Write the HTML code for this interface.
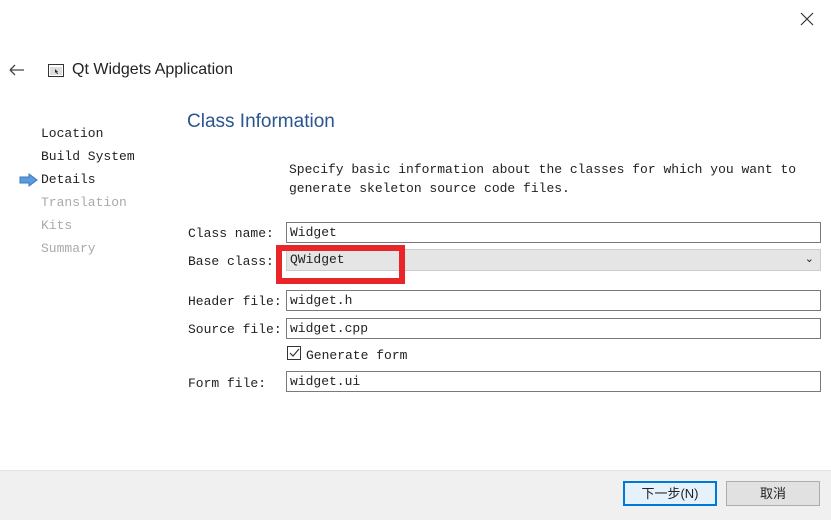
<!DOCTYPE html>
<html><head><meta charset="utf-8"><style>
body{margin:0;width:831px;height:519px;background:#fff;position:relative;overflow:hidden;font-family:"Liberation Mono","Noto Serif CJK SC",monospace;font-size:13px;color:#222}
.a{position:absolute;white-space:nowrap}
.f{position:absolute;left:286px;width:530px;height:19px;border:1px solid #7a7a7a;background:#fff;line-height:19px;padding-left:3px;box-sizing:content-box}
.l{position:absolute;left:188px}
.s{position:absolute;left:41px}
.btn{position:absolute;top:481px;height:25px;box-sizing:border-box;font-family:"Liberation Sans","Noto Sans CJK SC",sans-serif;font-size:13px;text-align:center;line-height:23px;background:#e1e1e1;border:1px solid #adadad}
</style></head><body>
<svg class="a" style="left:800px;top:12px" width="14" height="14"><path d="M1 1L13 13M13 1L1 13" stroke="#333" stroke-width="1.2"/></svg>
<svg class="a" style="left:9px;top:64px" width="16" height="12"><path d="M1 6H15M1 6L6 1M1 6L6 11" stroke="#444" stroke-width="1.3" fill="none"/></svg>
<svg class="a" style="left:48px;top:64px" width="16" height="13"><rect x="0.5" y="0.5" width="15" height="12" fill="#fff" stroke="#333"/><rect x="2" y="3" width="12" height="8" fill="#ddd"/><path d="M7 5l3 3-1 0 1 2-1 0-1-2-1 1z" fill="#222"/></svg>
<div class="a" style="left:72px;top:61px;font-family:'Liberation Sans',sans-serif;font-size:16px;color:#222">Qt Widgets Application</div>
<div class="a" style="left:187px;top:111px;font-family:'Liberation Sans',sans-serif;font-size:19px;color:#2a5590">Class Information</div>
<div class="s a" style="top:126px">Location</div>
<div class="s a" style="top:149px">Build System</div>
<svg class="a" style="left:19px;top:173px" width="20" height="14"><path d="M1 4h9V1l8 6-8 6V10H1z" fill="#5b9be0" stroke="#3a78c0"/></svg>
<div class="s a" style="top:172px">Details</div>
<div class="s a" style="top:195px;color:#aaa">Translation</div>
<div class="s a" style="top:218px;color:#aaa">Kits</div>
<div class="s a" style="top:241px;color:#aaa">Summary</div>
<div class="a" style="left:289px;top:160px;line-height:19px">Specify basic information about the classes for which you want to<br>generate skeleton source code files.</div>
<div class="l a" style="top:226px">Class name:</div><div class="f" style="top:222px">Widget</div>
<div class="l a" style="top:254px">Base class:</div>
<div class="f" style="top:249px;background:#e5e5e5;border-color:#ccc;height:20px">QWidget<span style="position:absolute;right:6px;top:0;font-family:'Liberation Sans';font-size:11px">&#8964;</span></div>
<div class="a" style="left:276px;top:245px;width:129px;height:39px;box-sizing:border-box;border:6px solid #e8262a"></div>
<div class="l a" style="top:294px">Header file:</div><div class="f" style="top:290px">widget.h</div>
<div class="l a" style="top:322px">Source file:</div><div class="f" style="top:318px">widget.cpp</div>
<div class="a" style="left:287px;top:346px;width:12px;height:12px;border:1px solid #333"><svg width="12" height="12" style="position:absolute;left:0;top:0"><path d="M2 6l3 3 6-7" fill="none" stroke="#333" stroke-width="1.2"/></svg></div>
<div class="a" style="left:306px;top:348px">Generate form</div>
<div class="l a" style="top:376px">Form file:</div><div class="f" style="top:371px">widget.ui</div>
<div class="a" style="left:0;top:470px;width:831px;height:49px;background:#f0f0f0;border-top:1px solid #e4e4e4"></div>
<div class="btn" style="left:623px;width:94px;background:#e5f1fb;border:2px solid #0078d7;line-height:21px">下一步(N)</div>
<div class="btn" style="left:726px;width:94px">取消</div>
</body></html>
